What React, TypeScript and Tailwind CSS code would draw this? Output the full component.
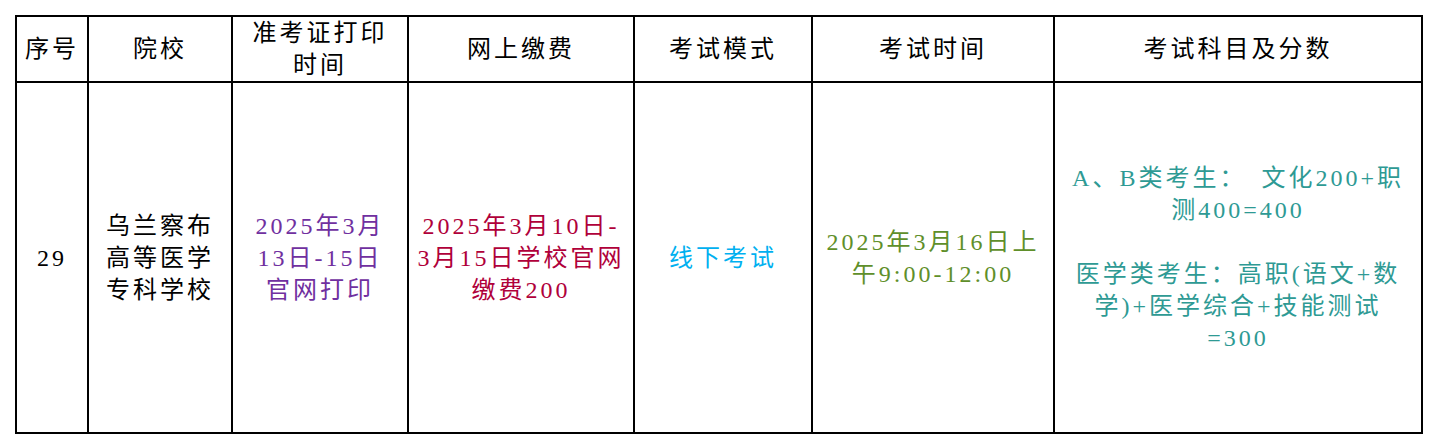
import React from "react";

const cell = "border-2 border-black text-center align-middle p-0";

function Lines({ lines, color }: { lines: string[]; color: string }) {
  return (
    <div className={color}>
      {lines.map((l, i) => (
        <div key={i} className="whitespace-pre h-[32px]">
          {l}
        </div>
      ))}
    </div>
  );
}

export default function App() {
  return (
    <div
      className="w-[1438px] h-[448px] bg-white pt-[15px] pl-[15px]"
      style={{ fontFamily: '"Liberation Serif", "Noto Sans CJK SC", serif' }}
    >
      <table className="table-fixed border-collapse border-2 border-black text-[24px] leading-[32px] tracking-[3px] text-black w-[1408px]">
        <colgroup>
          <col className="w-[72px]" />
          <col className="w-[144px]" />
          <col className="w-[176px]" />
          <col className="w-[226px]" />
          <col className="w-[178px]" />
          <col className="w-[242px]" />
          <col className="w-[368px]" />
        </colgroup>
        <thead>
          <tr className="h-[63px]">
            <th className={`${cell} font-normal`}>序号</th>
            <th className={`${cell} font-normal`}>院校</th>
            <th className={`${cell} font-normal`}>
              <Lines lines={["准考证打印", "时间"]} color="text-black" />
            </th>
            <th className={`${cell} font-normal`}>网上缴费</th>
            <th className={`${cell} font-normal`}>考试模式</th>
            <th className={`${cell} font-normal`}>考试时间</th>
            <th className={`${cell} font-normal`}>考试科目及分数</th>
          </tr>
        </thead>
        <tbody>
          <tr className="h-[351px]">
            <td className={cell}>29</td>
            <td className={cell}>
              <Lines lines={["乌兰察布", "高等医学", "专科学校"]} color="text-black" />
            </td>
            <td className={cell}>
              <Lines lines={["2025年3月", "13日-15日", "官网打印"]} color="text-[#7030a0]" />
            </td>
            <td className={cell}>
              <Lines
                lines={["2025年3月10日-", "3月15日学校官网", "缴费200"]}
                color="text-[#b0003a]"
              />
            </td>
            <td className={cell}>
              <Lines lines={["线下考试"]} color="text-[#00b0f0]" />
            </td>
            <td className={cell}>
              <Lines lines={["2025年3月16日上", "午9:00-12:00"]} color="text-[#5f8f2a]" />
            </td>
            <td className={cell}>
              <Lines
                lines={[
                  "A、B类考生：\u3000文化200+职",
                  "测400=400",
                  "",
                  "医学类考生：高职(语文+数",
                  "学)+医学综合+技能测试",
                  "=300",
                ]}
                color="text-[#2e9a94]"
              />
            </td>
          </tr>
        </tbody>
      </table>
    </div>
  );
}
